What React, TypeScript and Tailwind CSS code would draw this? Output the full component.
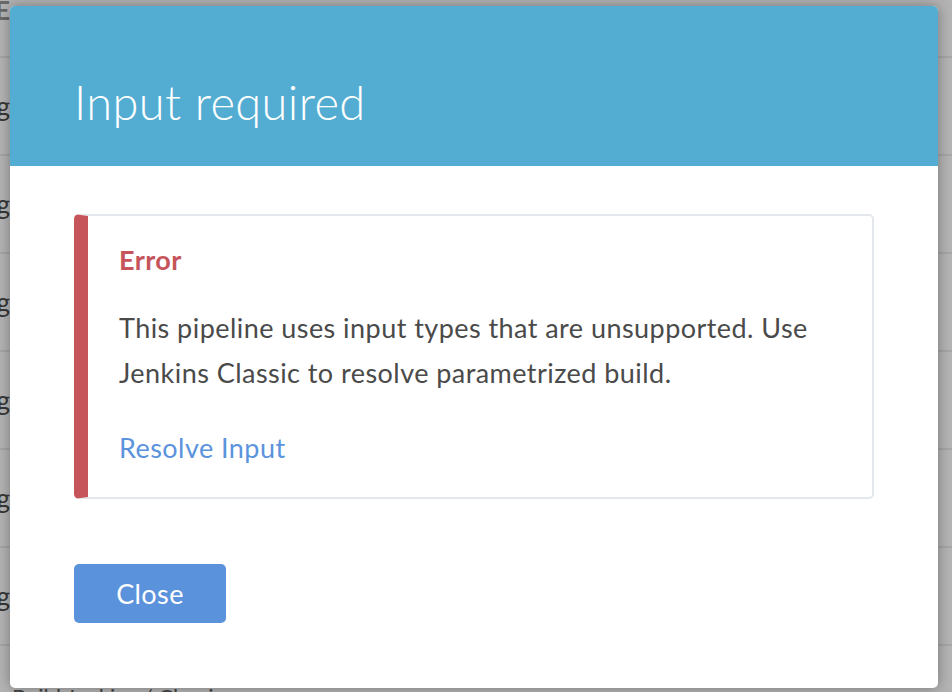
import React from 'react'

const rows = ['Building', 'Running', 'Starting', 'Testing', 'Pending', 'Deploying']

function Backdrop() {
  return (
    <div className="h-[692px] w-[952px] overflow-hidden bg-[#b4b4b4] font-['Lato',sans-serif]">
      <div className="flex h-[58px] items-start border-b-2 border-[#a6a6a6]">
        <div className="flex w-[10px] justify-end overflow-hidden">
          <span className="-mt-[4px] whitespace-nowrap text-[26px] font-bold leading-[28px] text-[#6a6a6a]">E</span>
        </div>
      </div>
      {rows.map((r) => (
        <div key={r} className="flex h-[98px] items-center border-b-2 border-[#a6a6a6]">
          <div className="flex w-[10px] justify-end overflow-hidden">
            <span className="whitespace-nowrap text-[26px] leading-[30px] text-[#363636]">{r}</span>
          </div>
        </div>
      ))}
      <div className="flex h-[60px] items-start pl-[12px] pt-[38px]">
        <span className="whitespace-nowrap text-[22px] leading-[26px] text-[#444]">Build Jenkins / Classic</span>
      </div>
    </div>
  )
}

export default function App() {
  return (
    <div className="relative h-[692px] w-[952px] overflow-hidden font-['Lato',sans-serif]">
      <Backdrop />

      {/* Modal */}
      <div className="absolute left-[10px] top-[6px] flex h-[682px] w-[928px] flex-col overflow-hidden rounded-[5px] bg-white shadow-[0_0_14px_rgba(0,0,0,0.35)]">
        <div className="h-[160px] shrink-0 bg-[#53add2] pl-[64px] pt-[68px]">
          <h2 className="text-[47px] font-light leading-[56px] tracking-[0.4px] text-white">Input required</h2>
        </div>

        <div className="px-[64px] pt-[48px]">
          <div className="h-[285px] rounded-[5px] border-2 border-l-[14px] border-[#e4e8ec] border-l-[#c5555a] pl-[31px] pr-[24px] pt-[26px] tracking-[0.45px]">
            <div className="text-[27px] font-bold leading-[36px] text-[#c5555a]">Error</div>
            <p className="mt-[27px] text-[27px] leading-[45px] text-[#4a4a4a]">
              This pipeline uses input types that are unsupported. Use Jenkins Classic to resolve parametrized build.
            </p>
            <a href="#" className="mt-[30px] block text-[27px] leading-[45px] text-[#5b93dc]">
              Resolve Input
            </a>
          </div>

          <button className="mt-[65px] h-[59px] w-[152px] rounded-[5px] bg-[#5b92dc] text-[27px] leading-[59px] tracking-[0.4px] text-white">
            Close
          </button>
        </div>
      </div>
    </div>
  )
}
